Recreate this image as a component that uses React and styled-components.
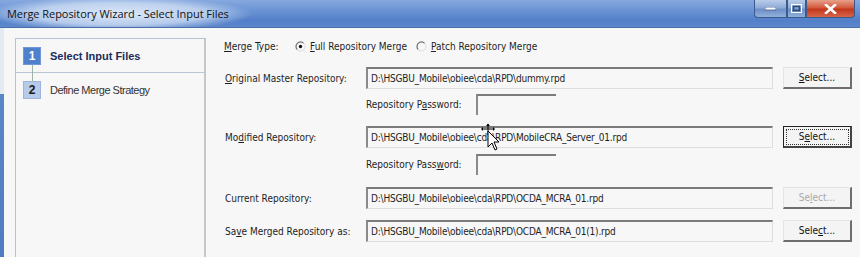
import React from 'react';
import styled, { createGlobalStyle } from 'styled-components';

const GlobalStyle = createGlobalStyle`
  html, body {
    margin: 0;
    padding: 0;
    background: #f7f7f7;
    overflow: hidden;
  }
  body {
    font-family: "DejaVu Sans Condensed", "DejaVu Sans", sans-serif;
    font-size: 10px;
    color: #1e1e1e;
  }
`;

const Window = styled.div`
  width: 860px;
  height: 257px;
  display: flex;
  flex-direction: column;
  background: #f7f7f7;
  position: relative;
  overflow: hidden;
`;

const TitleBar = styled.div`
  height: 27px;
  flex-shrink: 0;
  display: flex;
  align-items: center;
  justify-content: space-between;
  background:
    radial-gradient(ellipse 135px 17px at 118px 14px, rgba(228, 238, 251, 0.95) 0%, rgba(205, 221, 243, 0.8) 65%, rgba(205, 221, 243, 0) 100%),
    linear-gradient(180deg, #86a8de 0%, #6a93d5 40%, #527fc8 75%, #5d88cd 100%);
  border-bottom: 1px solid #4a6fa8;
`;

const TitleText = styled.span`
  font-family: "Open Sans", "Noto Sans", sans-serif;
  font-size: 11px;
  color: #111;
  padding-left: 7px;
  letter-spacing: -0.05px;
`;

const Controls = styled.div`
  display: flex;
  align-self: flex-start;
  margin-right: 5px;
`;

const CtrlButton = styled.div`
  height: 18px;
  width: ${p => p.w}px;
  display: flex;
  align-items: center;
  justify-content: center;
  border: 1px solid #3a5a8c;
  border-top: none;
  box-sizing: border-box;
  background: ${p => p.close
    ? 'linear-gradient(180deg, #e8a08a 0%, #d25a3e 45%, #c2381c 55%, #d8654a 100%)'
    : 'linear-gradient(180deg, #b9cdea 0%, #8eaad6 45%, #6f8fc6 55%, #90b0dc 100%)'};
  border-radius: ${p => p.first ? '0 0 0 4px' : p.close ? '0 0 4px 0' : '0'};
`;

const Body = styled.div`
  flex: 1;
  display: flex;
  border-left: 4px solid #5b86c8;
  border-image: linear-gradient(180deg, #e4eaf2 0px, #e4eaf2 66px, #5b86c8 66px, #4f7bc2 100%) 1;
  padding: 10px 0 0 11px;
`;

const StepsPanel = styled.div`
  width: 188px;
  flex-shrink: 0;
  border: 1px solid #b4c2d6;
  border-right: 2px solid #c6c6c6;
  border-bottom: none;
  background: #f7f7f7;
  font-family: "Liberation Sans", Arial, sans-serif;
`;

const Step = styled.div`
  display: flex;
  align-items: center;
  gap: 9px;
  height: ${p => p.active ? 33 : 34}px;
  padding-left: 7px;
  border-bottom: ${p => p.active ? '1px solid #b9c4d4' : 'none'};
  position: relative;
`;

const StepNum = styled.div`
  width: 18px;
  height: 18px;
  box-sizing: border-box;
  display: flex;
  align-items: center;
  justify-content: center;
  font-weight: bold;
  font-size: 12px;
  background: ${p => p.active ? '#4f80cc' : '#b6cbe8'};
  color: ${p => p.active ? '#ffffff' : '#1a1a1a'};
  border: 1px solid ${p => p.active ? '#6f96d6' : '#9fb6da'};
  position: relative;
  z-index: 1;
`;

const StepLink = styled.div`
  position: absolute;
  left: 16px;
  top: 26px;
  width: 1px;
  height: 17px;
  background: #9fb5a8;
`;

const StepLabel = styled.span`
  font-size: 11px;
  font-weight: ${p => p.active ? 'bold' : 'normal'};
  letter-spacing: ${p => p.active ? '0' : '-0.5px'};
  color: ${p => p.active ? '#1b2c5c' : '#333'};
`;

const Form = styled.div`
  flex: 1;
  padding: 0 0 0 17px;
  display: flex;
  flex-direction: column;
`;

const TypeRow = styled.div`
  display: flex;
  align-items: center;
  height: 16px;
  padding-left: 1px;
`;

const TypeLabel = styled.span`
  width: 71px;
`;

const RadioItem = styled.label`
  display: flex;
  align-items: center;
  gap: 4px;
  margin-right: ${p => p.mr || 0}px;
`;

const U = styled.span`
  text-decoration: underline;
`;

const Row = styled.div`
  display: grid;
  grid-template-columns: 131px 407px 69px;
  column-gap: 10px;
  align-items: center;
  height: 22px;
  margin-top: ${p => p.mt}px;
  padding-left: 2px;
`;

const FieldLabel = styled.span`
  white-space: nowrap;
`;

const TextBox = styled.div`
  height: 22px;
  box-sizing: border-box;
  display: flex;
  align-items: center;
  padding-left: 3px;
  background: #f7f7f7;
  border-top: 2px solid #7b7b7b;
  border-left: 2px solid #8a8a8a;
  border-right: 1px solid #dedede;
  border-bottom: 1px solid #dedede;
  white-space: nowrap;
  overflow: hidden;
`;

const PathText = styled.span`
  letter-spacing: -0.2px;
`;

const Button = styled.div`
  height: 22px;
  box-sizing: border-box;
  display: flex;
  align-items: center;
  justify-content: center;
  background: #f4f4f4;
  border-top: 1px solid #e4e4e4;
  border-left: 1px solid #e4e4e4;
  border-right: 2px solid #6e6e6e;
  border-bottom: 2px solid #6e6e6e;
  color: ${p => p.disabled ? '#a8a8a8' : '#111'};
  ${p => p.focused && `
    outline: 1px dotted #333;
    outline-offset: -4px;
    border: 1px solid #222;
    border-right: 2px solid #444;
    border-bottom: 2px solid #444;
  `}
`;

const PasswordRow = styled.div`
  display: flex;
  align-items: center;
  height: 21px;
  margin-top: ${p => p.mt}px;
  padding-left: 143px;
`;

const PasswordLabel = styled.span`
  width: 110px;
  white-space: nowrap;
`;

const PasswordBox = styled(TextBox)`
  width: 80px;
  height: 21px;
  border-right: none;
  border-bottom: none;
`;

const Cursor = styled.svg`
  position: absolute;
  left: 478px;
  top: 123px;
`;

function Radio({ checked }) {
  return (
    <svg width="11" height="11" viewBox="0 0 11 11">
      <circle cx="5.5" cy="5.5" r="4.5" fill="#f7f7f7" />
      <path d="M2.3 8.7 A4.5 4.5 0 0 1 8.7 2.3" fill="none" stroke="#6e6e6e" strokeWidth="1.2" />
      <path d="M8.7 2.3 A4.5 4.5 0 0 1 2.3 8.7" fill="none" stroke="#e2e2e2" strokeWidth="1.2" />
      {checked && <circle cx="5.5" cy="5.5" r="1.7" fill="#111" />}
    </svg>
  );
}

function FileRow({ label, path, button, mt, disabled, focused }) {
  return (
    <Row mt={mt}>
      <FieldLabel>{label}</FieldLabel>
      <TextBox><PathText>{path}</PathText></TextBox>
      <Button disabled={disabled} focused={focused}>{button}</Button>
    </Row>
  );
}

export default function App() {
  return (
    <>
      <GlobalStyle />
      <Window>
        <TitleBar>
          <TitleText>Merge Repository Wizard - Select Input Files</TitleText>
          <Controls>
            <CtrlButton w={33} first>
              <svg width="11" height="4"><rect x="0" y="0" width="11" height="3" fill="#fff" stroke="#3d5a88" strokeWidth="0.8" /></svg>
            </CtrlButton>
            <CtrlButton w={19}>
              <svg width="11" height="9"><rect x="0.5" y="0.5" width="10" height="8" fill="none" stroke="#fff" strokeWidth="1" /><rect x="2.5" y="2.5" width="6" height="4" fill="none" stroke="#2d4a78" strokeWidth="1.5" /></svg>
            </CtrlButton>
            <CtrlButton w={49} close>
              <svg width="13" height="10" viewBox="0 0 13 10"><path d="M2 1 L11 9 M11 1 L2 9" stroke="#fff" strokeWidth="2.6" strokeLinecap="square" /></svg>
            </CtrlButton>
          </Controls>
        </TitleBar>
        <Body>
          <StepsPanel>
            <Step active>
              <StepNum active>1</StepNum>
              <StepLabel active>Select Input Files</StepLabel>
              <StepLink />
            </Step>
            <Step>
              <StepNum>2</StepNum>
              <StepLabel>Define Merge Strategy</StepLabel>
            </Step>
          </StepsPanel>
          <Form>
            <TypeRow>
              <TypeLabel><U>M</U>erge Type:</TypeLabel>
              <RadioItem mr={9}><Radio checked /><span><U>F</U>ull Repository Merge</span></RadioItem>
              <RadioItem><Radio /><span><U>P</U>atch Repository Merge</span></RadioItem>
            </TypeRow>
            <FileRow mt={13} label={<><U>O</U>riginal Master Repository:</>} path="D:\HSGBU_Mobile\obiee\cda\RPD\dummy.rpd" button={<><U>S</U>elect...</>} />
            <PasswordRow mt={5}>
              <PasswordLabel>Repository P<U>a</U>ssword:</PasswordLabel>
              <PasswordBox />
            </PasswordRow>
            <FileRow mt={11} label={<>Mo<U>d</U>ified Repository:</>} path="D:\HSGBU_Mobile\obiee\cda\RPD\MobileCRA_Server_01.rpd" button={<>S<U>e</U>lect...</>} focused />
            <PasswordRow mt={6}>
              <PasswordLabel>Repository Pass<U>w</U>ord:</PasswordLabel>
              <PasswordBox />
            </PasswordRow>
            <FileRow mt={12} label="Current Repository:" path="D:\HSGBU_Mobile\obiee\cda\RPD\OCDA_MCRA_01.rpd" button={<>Se<U>l</U>ect...</>} disabled />
            <FileRow mt={11} label={<>Sa<U>v</U>e Merged Repository as:</>} path="D:\HSGBU_Mobile\obiee\cda\RPD\OCDA_MCRA_01(1).rpd" button={<>Sele<U>c</U>t...</>} />
          </Form>
        </Body>
        <Cursor width="22" height="28" viewBox="0 0 22 28">
          <path d="M10 1 L10 12 M5 6 L15 6" stroke="#000" strokeWidth="1" />
          <path d="M8 3 L10 0.5 L12 3 Z M3 6 L5 4 L5 8 Z M17 6 L15 4 L15 8 Z" fill="#000" />
          <path d="M10 8 L10 24 L14 20 L17 27 L19 26 L16 19 L21 19 Z" fill="#fff" stroke="#000" strokeWidth="1" />
        </Cursor>
      </Window>
    </>
  );
}
